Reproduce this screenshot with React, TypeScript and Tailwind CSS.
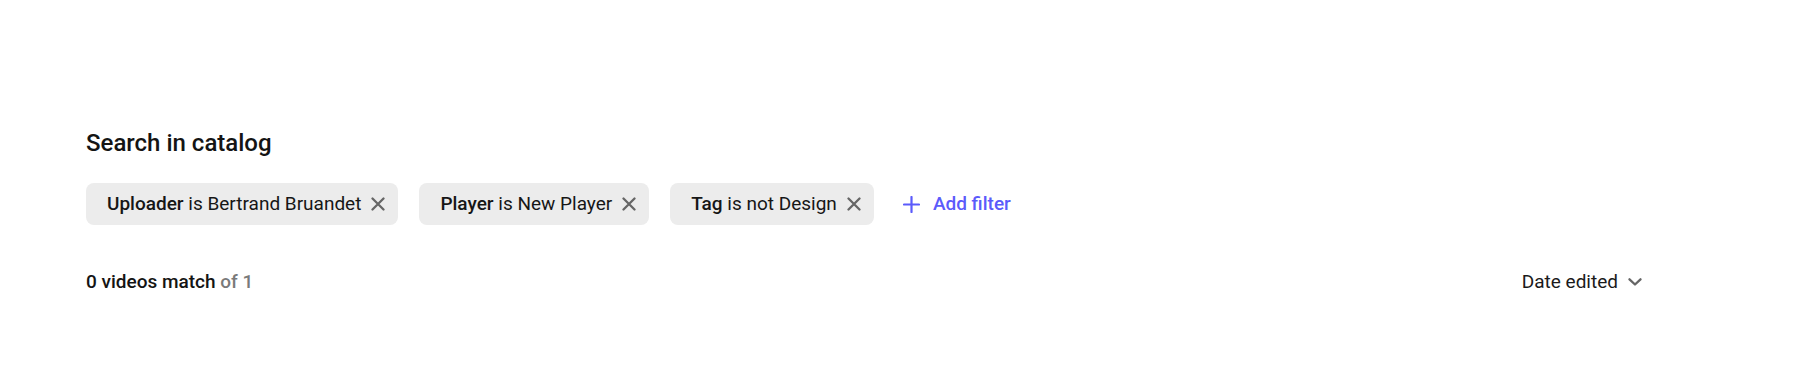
type Filter = { field: string; op: string; value: string };

const filters: Filter[] = [
  { field: "Uploader", op: "is", value: "Bertrand Bruandet" },
  { field: "Player", op: "is", value: "New Player" },
  { field: "Tag", op: "is not", value: "Design" },
];

const CloseIcon = () => (
  <svg width="14" height="14" viewBox="0 0 14 14" fill="none">
    <path d="M1.5 1.5L12.5 12.5M12.5 1.5L1.5 12.5" stroke="currentColor" strokeWidth="2.3" strokeLinecap="round" />
  </svg>
);

const PlusIcon = () => (
  <svg width="17" height="17" viewBox="0 0 17 17" fill="none">
    <path d="M8.5 1v15M1 8.5h15" stroke="currentColor" strokeWidth="2.2" strokeLinecap="round" />
  </svg>
);

const ChevronIcon = () => (
  <svg width="14" height="8" viewBox="0 0 14 8" fill="none">
    <path d="M1.5 1.3L7 6.5l5.5-5.2" stroke="currentColor" strokeWidth="2.3" strokeLinecap="round" strokeLinejoin="round" />
  </svg>
);

const FilterChip = ({ filter }: { filter: Filter }) => (
  <div className="flex items-center h-[42px] gap-[10px] pl-[21px] pr-[13px] rounded-lg bg-[#ececec] text-[19px] leading-6 text-[#161616]">
    <span>
      <span className="font-medium">{filter.field}</span> {filter.op} {filter.value}
    </span>
    <button className="text-[#666] flex items-center">
      <CloseIcon />
    </button>
  </div>
);

const App = () => {
  return (
    <main className="w-[1800px] h-[388px] bg-white font-['Roboto',sans-serif]">
      <div className="w-[1642px] pl-[86px] pt-[127px]">
        <h1 className="text-[24px] leading-8 font-medium text-[#141414]">Search in catalog</h1>

        <section className="flex items-center gap-[21px] mt-[24px]">
          {filters.map((f) => (
            <FilterChip key={f.field} filter={f} />
          ))}
          <button className="flex items-center gap-[13px] ml-[8px] text-[19px] leading-6 font-medium text-[#5b5bfb]">
            <PlusIcon />
            Add filter
          </button>
        </section>

        <section className="flex items-center justify-between mt-[45px] text-[19px] leading-6">
          <div className="font-medium text-[#141414]">
            0 videos match <span className="text-[#7a7a7a]">of 1</span>
          </div>
          <button className="flex items-center gap-[10px] text-[#1a1a1a]">
            Date edited
            <span className="text-[#666] flex items-center">
              <ChevronIcon />
            </span>
          </button>
        </section>
      </div>
    </main>
  );
};

export default App;
